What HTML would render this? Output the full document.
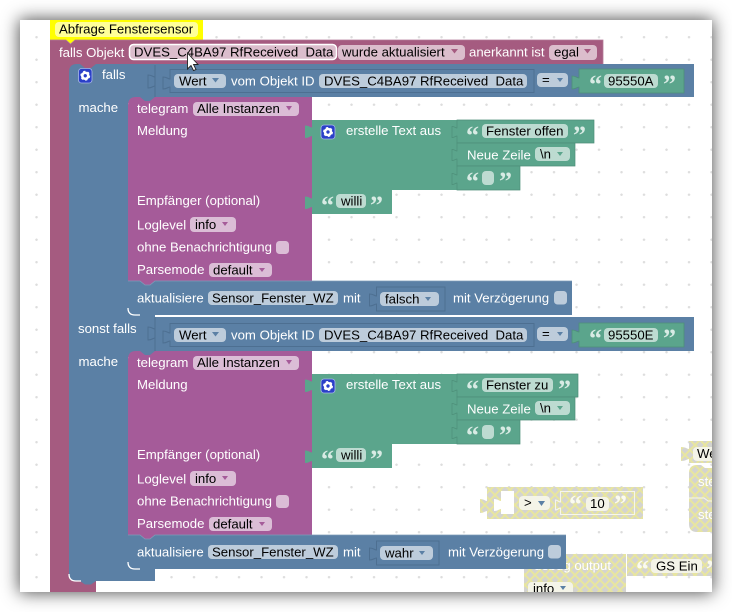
<!DOCTYPE html>
<html><head><meta charset="utf-8">
<style>
html,body{margin:0;padding:0;background:#fff;width:732px;height:612px;overflow:hidden}
#w{position:absolute;left:20px;top:20px;width:692px;height:572px;background:#fff;overflow:hidden;box-shadow:0 0 16px 1px rgba(0,0,0,.68)}
svg{position:absolute;left:-20px;top:-20px;filter:blur(.3px)}
text{font-family:"Liberation Sans",sans-serif;font-size:13.2px;white-space:pre;fill:#000}
.w{fill:#fff}
.qg{font-family:"Liberation Serif",serif;font-weight:bold;font-size:26px;fill:#d8ebe4}
.qd{font-family:"Liberation Serif",serif;font-weight:bold;font-size:26px;fill:#fbfbf0}
</style></head><body>
<div id="w">
<svg width="732" height="612" viewBox="0 0 732 612">
<defs>
<pattern id="d" width="22.5" height="22.5" patternUnits="userSpaceOnUse" patternTransform="translate(25.3 26)">
<rect x="10.5" y="10" width="1.4" height="2.4" fill="#ddd"/><rect x="10" y="10.5" width="2.4" height="1.4" fill="#ddd"/>
</pattern>
<pattern id="h" width="10" height="10" patternUnits="userSpaceOnUse">
<rect width="10" height="10" fill="#d4d4d0"/><path d="M0 0L10 10M10 0L0 10" stroke="#e8e69f" stroke-width="2"/>
</pattern>
<g id="gear"><circle r="3" fill="none" stroke="#fff" stroke-width="2.600"/><circle r="4.300" fill="none" stroke="#fff" stroke-width="1.300" stroke-dasharray="2.250 2.250"/></g>
</defs>
<rect x="20" y="20" width="692" height="572" fill="url(#d)"/>

<!-- disabled blocks -->
<path d="M487 487H643V519H487V511c-2,0-3,2-7,2v-14c4,0 5,2 7,2z" fill="url(#h)"/>
<path d="M501 491H514V514H501V509c-2,0-3,2-7,2v-12c4,0 5,2 7,2z" fill="#fff"/>
<rect x="519" y="496" width="31" height="14" rx="4" fill="#f4f4e8"/>
<text x="524" y="507">&gt;</text><polygon points="538,501 545,501 541.500,506" fill="#5b80a5"/>
<path d="M560.500 491.500H634.500V514.500H560.500V508c-2,0-3,2-5,2v-10c2,0 3,2 5,2z" fill="none" stroke="#f6f6ec" stroke-width="1.100"/>
<text class="qd" x="569" y="513">“</text>
<rect x="586" y="497" width="23" height="14" rx="4" fill="#f4f4e8"/><text x="590" y="508">10</text>
<text class="qd" x="614" y="513">”</text>

<path d="M524 554H626V592H524Z" fill="url(#h)"/>
<text class="w" x="534" y="570">debug output</text>
<path d="M627 554H712V576H627Z" fill="url(#h)"/>
<text class="qd" x="636" y="578">“</text>
<rect x="651" y="559" width="51" height="14" rx="4" fill="#f4f4e8"/><text x="656" y="570.500">GS Ein</text>
<text class="qd" x="706" y="578">”</text>
<rect x="528" y="582" width="45" height="16" rx="4" fill="#f4f4e8"/><text x="533" y="593">info</text><polygon points="560,586 566,586 563,590" fill="#5b80a5"/>

<path d="M689 441H712V463H689V459c-2,0-3,2-8,2v-14c5,0 6,2 8,2z" fill="url(#h)"/>
<rect x="693" y="447" width="25" height="14" rx="4" fill="#f4f4e8"/><text x="697" y="458">Wert</text>
<path d="M689 473q0-8 8-8h4l4 3h7V532H697q-8 0-8-8z" fill="url(#h)"/>
<path d="M689 498h15l4 3h4" fill="none" stroke="#f6f6ec"/>
<text class="w" x="698" y="486">steuere</text><text class="w" x="698" y="519">steuere</text>

<!-- comment -->
<path d="M50 20H203V40H75L70.500 43.500L66 40H50Z" fill="#ffff00"/>
<rect x="55" y="22" width="143" height="15" rx="4" fill="#ffff99"/>
<text x="59" y="33.500">Abfrage Fenstersensor</text>

<!-- maroon -->
<path d="M50 40H66L70.500 44L75 40H603V64H96V581H96V592H50Z" fill="#a55b80"/>
<path d="M50 40H66L70.500 44L75 40H603V64" fill="none" stroke="#b47a97" stroke-width=".8"/>
<text class="w" x="59" y="57">falls Objekt</text>
<rect x="129.500" y="44.500" width="207" height="15" rx="4" fill="#dbbdcc" stroke="#fff" stroke-width="1.500"/>
<text x="134" y="56.500">DVES_C4BA97 RfReceived  Data</text>
<rect x="338" y="45" width="127" height="15" rx="4" fill="#dbbdcc"/>
<text x="342" y="56.500">wurde aktualisiert</text><polygon points="451,49 458,49 454.500,53.500" fill="#a55b80"/>
<text class="w" x="469" y="56.500">anerkannt ist</text>
<rect x="549" y="45" width="48" height="15" rx="4" fill="#dbbdcc"/>
<text x="554" y="56.500">egal</text><polygon points="584,49 591,49 587.500,53.500" fill="#a55b80"/>

<!-- blue -->
<path d="M69 72q0-8 8-8h3l5 4h6l5-4H694V97H128V581H96L91 584.500H85L80 581H77q-8 0-8-8Z" fill="#5b80a5"/>
<rect x="128" y="96" width="27" height="7" fill="#5b80a5"/>
<rect x="128" y="315" width="27" height="42" fill="#5b80a5"/>
<rect x="128" y="569" width="27" height="12" fill="#5b80a5"/>
<path d="M69 574q0 7 7 7h5" fill="none" stroke="#fff" stroke-width="1.300"/>
<path d="M155 65V97" stroke="#4d6f91" stroke-width="1"/>
<path d="M155 86c-2,0-3,2-7,2v-13c4,0 5,2 7,2" fill="none" stroke="#4d6f91"/>
<rect x="78.500" y="68.500" width="13.500" height="14.500" rx="3" fill="#2a3fc8" stroke="#a7b7e8" stroke-width=".8"/>
<use href="#gear" x="85.250" y="75.750"/>
<text class="w" x="102" y="79">falls</text>
<text class="w" x="78.500" y="112">mache</text>
<text class="w" x="78" y="333">sonst falls</text>
<text class="w" x="78.500" y="366">mache</text>

<!-- cond 1 -->
<path d="M170 69.500H534V92.500H170V87c-2,0-3,2-7,2v-12c4,0 5,2 7,2z" fill="#5b80a5" stroke="#4d6f91"/>
<rect x="174" y="74" width="52" height="14" rx="4" fill="#bdccdb"/>
<text x="179" y="85.500">Wert</text><polygon points="212,78 219,78 215.500,82.500" fill="#5b80a5"/>
<text class="w" x="231" y="85.500">vom Objekt ID</text>
<rect x="319" y="74" width="208" height="14" rx="4" fill="#bdccdb"/>
<text x="324" y="85.500">DVES_C4BA97 RfReceived  Data</text>
<rect x="537" y="73" width="31" height="14" rx="4" fill="#bdccdb"/>
<text x="542" y="84">=</text><polygon points="557,78 563,78 560,82" fill="#5b80a5"/>
<path d="M579 69H684V93H579V87c-2,0-3,2-7,2v-13c4,0 5,2 7,2z" fill="#5ba58c" stroke="#4d8f79" stroke-width=".8"/>
<text class="qg" x="589" y="93">“</text>
<rect x="604" y="74" width="54" height="14" rx="4" fill="#bddbd1"/><text x="608" y="85.500">95550A</text>
<text class="qg" x="663" y="93">”</text>

<!-- telegram 1 -->
<path d="M128 105q0-8 8-8h4l5 4h5l5-4H312V281H155L150 285H145L140 281H128Z" fill="#a55b99"/>
<text class="w" x="137" y="113">telegram</text>
<rect x="193" y="102" width="106" height="14" rx="4" fill="#dbbdd6"/>
<text x="197" y="113">Alle Instanzen</text><polygon points="286,106 292,106 289,110.500" fill="#a55b99"/>
<text class="w" x="137" y="135">Meldung</text>
<text class="w" x="137" y="205">Empfänger (optional)</text>
<text class="w" x="137" y="229.500">Loglevel</text>
<rect x="190" y="217" width="46" height="15" rx="4" fill="#dbbdd6"/><text x="195" y="229">info</text><polygon points="222,222 228,222 225,226" fill="#a55b99"/>
<text class="w" x="137" y="251.500">ohne Benachrichtigung</text>
<rect x="276" y="241" width="13" height="13" rx="3.500" fill="#dbbdd6"/>
<text class="w" x="137" y="274">Parsemode</text>
<rect x="209" y="263" width="63" height="14" rx="4" fill="#dbbdd6"/><text x="213" y="274.500">default</text><polygon points="259,268 265,268 262,272" fill="#a55b99"/>

<!-- green 1 -->
<path d="M312 120H457V190H312V136c-2,0-3,2-7,2v-12.500c4,0 5,2 7,2z" fill="#5ba58c"/>
<rect x="321" y="125" width="14" height="14" rx="3" fill="#2a3fc8" stroke="#a7b7e8" stroke-width=".8"/>
<use href="#gear" x="328" y="132"/>
<text class="w" x="346" y="135">erstelle Text aus</text>
<path d="M457 120H594V143H457V136c-1.500,0-2,1.500-5,1.500v-11c3,0 3.500,1.500 5,1.500z" fill="#5ba58c" stroke="#4d8f79" stroke-width=".7"/>
<text class="qg" x="466" y="144">“</text>
<rect x="482" y="124" width="86" height="14" rx="4" fill="#bddbd1"/><text x="486" y="135.500">Fenster offen</text>
<text class="qg" x="573" y="144">”</text>
<path d="M457 143H575V166H457V159c-1.500,0-2,1.500-5,1.500v-11c3,0 3.500,1.500 5,1.500z" fill="#5ba58c" stroke="#4d8f79" stroke-width=".7"/>
<text class="w" x="467" y="159.500">Neue Zeile</text>
<rect x="535" y="147" width="35" height="14" rx="4" fill="#bddbd1"/><text x="540" y="158.500">\n</text><polygon points="557,152 563,152 560,156" fill="#5ba58c"/>
<path d="M457 166H520V190H457V183c-1.500,0-2,1.500-5,1.500v-11c3,0 3.500,1.500 5,1.500z" fill="#5ba58c" stroke="#4d8f79" stroke-width=".7"/>
<text class="qg" x="466" y="190">“</text>
<rect x="482" y="171" width="12" height="14" rx="4" fill="#bddbd1"/>
<text class="qg" x="499" y="190">”</text>
<path d="M312 190H392V214H312V207c-2,0-3,2-7,2v-12.500c4,0 5,2 7,2z" fill="#5ba58c"/>
<text class="qg" x="321" y="214">“</text>
<rect x="336" y="194" width="30" height="14" rx="4" fill="#bddbd1"/><text x="341" y="205.500">willi</text>
<text class="qg" x="370" y="214">”</text>

<!-- aktualisiere 1 -->
<path d="M128 281H140L145 285H150L155 281H572V315H155L150 318H145L140 315H128Z" fill="#5b80a5"/>
<path d="M128 281H140L145 285H150L155 281H572" fill="none" stroke="#7e9cb9" stroke-width=".8"/>
<path d="M128 308q0 7 7 7h5" fill="none" stroke="#fff" stroke-width="1.300"/>
<text class="w" x="137" y="302.500">aktualisiere</text>
<rect x="208" y="291" width="130" height="14" rx="4" fill="#bdccdb"/><text x="212" y="302.500">Sensor_Fenster_WZ</text>
<text class="w" x="343" y="302.500">mit</text>
<path d="M376.500 287H445V311H376.500V304c-2,0-3,2-7,2v-12c4,0 5,2 7,2z" fill="#5b80a5" stroke="#4d6f91"/>
<rect x="380" y="292" width="59" height="14" rx="4" fill="#bdccdb"/><text x="385" y="303.500">falsch</text><polygon points="425,297 431,297 428,301" fill="#5b80a5"/>
<text class="w" x="453" y="302.500">mit Verzögerung</text>
<rect x="554" y="291" width="13" height="13.500" rx="3.500" fill="#bdccdb"/>

<!-- cond 2 -->
<path d="M155 317H694V351H155Z" fill="#5b80a5"/>
<path d="M155 317V351" stroke="#4d6f91"/>
<path d="M155 338c-2,0-3,2-7,2v-13c4,0 5,2 7,2" fill="none" stroke="#4d6f91"/>
<path d="M170 323.500H534V346.500H170V341c-2,0-3,2-7,2v-12c4,0 5,2 7,2z" fill="#5b80a5" stroke="#4d6f91"/>
<rect x="174" y="328" width="52" height="14" rx="4" fill="#bdccdb"/>
<text x="179" y="339.500">Wert</text><polygon points="212,332 219,332 215.500,336.500" fill="#5b80a5"/>
<text class="w" x="231" y="339.500">vom Objekt ID</text>
<rect x="319" y="328" width="208" height="14" rx="4" fill="#bdccdb"/>
<text x="324" y="339.500">DVES_C4BA97 RfReceived  Data</text>
<rect x="537" y="327" width="31" height="14" rx="4" fill="#bdccdb"/>
<text x="542" y="338">=</text><polygon points="557,332 563,332 560,336" fill="#5b80a5"/>
<path d="M579 323H684V347H579V341c-2,0-3,2-7,2v-13c4,0 5,2 7,2z" fill="#5ba58c" stroke="#4d8f79" stroke-width=".8"/>
<text class="qg" x="589" y="347">“</text>
<rect x="604" y="328" width="54" height="14" rx="4" fill="#bddbd1"/><text x="608" y="339.500">95550E</text>
<text class="qg" x="663" y="347">”</text>

<!-- telegram 2 -->
<path d="M128 359q0-8 8-8h4l5 4h5l5-4H312V535H155L150 539H145L140 535H128Z" fill="#a55b99"/>
<text class="w" x="137" y="367">telegram</text>
<rect x="193" y="356" width="106" height="14" rx="4" fill="#dbbdd6"/>
<text x="197" y="367">Alle Instanzen</text><polygon points="286,360 292,360 289,364.500" fill="#a55b99"/>
<text class="w" x="137" y="389">Meldung</text>
<text class="w" x="137" y="459">Empfänger (optional)</text>
<text class="w" x="137" y="483.500">Loglevel</text>
<rect x="190" y="471" width="46" height="15" rx="4" fill="#dbbdd6"/><text x="195" y="483">info</text><polygon points="222,476 228,476 225,480" fill="#a55b99"/>
<text class="w" x="137" y="505.500">ohne Benachrichtigung</text>
<rect x="276" y="495" width="13" height="13" rx="3.500" fill="#dbbdd6"/>
<text class="w" x="137" y="528">Parsemode</text>
<rect x="209" y="517" width="63" height="14" rx="4" fill="#dbbdd6"/><text x="213" y="528.500">default</text><polygon points="259,522 265,522 262,526" fill="#a55b99"/>

<!-- green 2 -->
<path d="M312 374H457V444H312V390c-2,0-3,2-7,2v-12.500c4,0 5,2 7,2z" fill="#5ba58c"/>
<rect x="321" y="379" width="14" height="14" rx="3" fill="#2a3fc8" stroke="#a7b7e8" stroke-width=".8"/>
<use href="#gear" x="328" y="386"/>
<text class="w" x="346" y="389">erstelle Text aus</text>
<path d="M457 374H578V397H457V390c-1.500,0-2,1.500-5,1.500v-11c3,0 3.500,1.500 5,1.500z" fill="#5ba58c" stroke="#4d8f79" stroke-width=".7"/>
<text class="qg" x="466" y="398">“</text>
<rect x="482" y="378" width="71" height="14" rx="4" fill="#bddbd1"/><text x="486" y="389.500">Fenster zu</text>
<text class="qg" x="558" y="398">”</text>
<path d="M457 397H575V420H457V413c-1.500,0-2,1.500-5,1.500v-11c3,0 3.500,1.500 5,1.500z" fill="#5ba58c" stroke="#4d8f79" stroke-width=".7"/>
<text class="w" x="467" y="413.500">Neue Zeile</text>
<rect x="535" y="401" width="35" height="14" rx="4" fill="#bddbd1"/><text x="540" y="412.500">\n</text><polygon points="557,406 563,406 560,410" fill="#5ba58c"/>
<path d="M457 420H520V444H457V437c-1.500,0-2,1.500-5,1.500v-11c3,0 3.500,1.500 5,1.500z" fill="#5ba58c" stroke="#4d8f79" stroke-width=".7"/>
<text class="qg" x="466" y="444">“</text>
<rect x="482" y="425" width="12" height="14" rx="4" fill="#bddbd1"/>
<text class="qg" x="499" y="444">”</text>
<path d="M312 444H392V468H312V461c-2,0-3,2-7,2v-12.500c4,0 5,2 7,2z" fill="#5ba58c"/>
<text class="qg" x="321" y="468">“</text>
<rect x="336" y="448" width="30" height="14" rx="4" fill="#bddbd1"/><text x="341" y="459.500">willi</text>
<text class="qg" x="370" y="468">”</text>

<!-- aktualisiere 2 -->
<path d="M128 535H140L145 539H150L155 535H566V569H155L150 572H145L140 569H128Z" fill="#5b80a5"/>
<path d="M128 535H140L145 539H150L155 535H566" fill="none" stroke="#7e9cb9" stroke-width=".8"/>
<path d="M128 562q0 7 7 7h5" fill="none" stroke="#fff" stroke-width="1.300"/>
<text class="w" x="137" y="556.500">aktualisiere</text>
<rect x="208" y="545" width="130" height="14" rx="4" fill="#bdccdb"/><text x="212" y="556.500">Sensor_Fenster_WZ</text>
<text class="w" x="343" y="556.500">mit</text>
<path d="M376.500 541H439V565H376.500V558c-2,0-3,2-7,2v-12c4,0 5,2 7,2z" fill="#5b80a5" stroke="#4d6f91"/>
<rect x="380" y="546" width="53" height="14" rx="4" fill="#bdccdb"/><text x="385" y="557.500">wahr</text><polygon points="419,551 425,551 422,555" fill="#5b80a5"/>
<text class="w" x="448" y="556.500">mit Verzögerung</text>
<rect x="548" y="545" width="13" height="13.500" rx="3.500" fill="#bdccdb"/>

<!-- cursor -->
<path d="M187.500 53V69L191 65.500L193.500 70.500L196 69.500L193.500 64.500H198Z" fill="#fff" stroke="#222" stroke-width=".9"/>
</svg>
</div>
</body></html>
